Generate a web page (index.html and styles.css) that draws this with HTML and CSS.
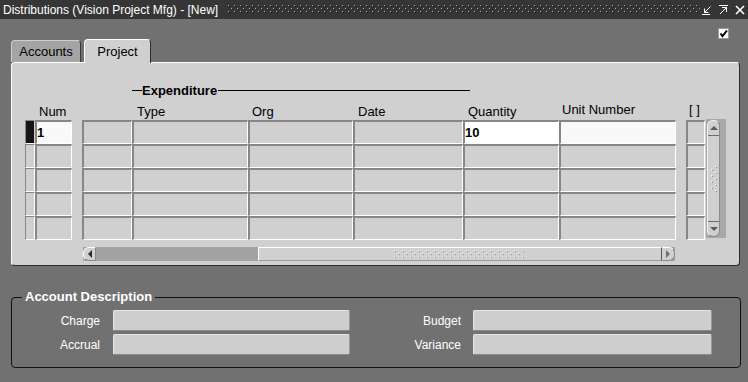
FILE: index.html
```html
<!DOCTYPE html>
<html lang="en">
<head>
  <meta charset="UTF-8" />
  <title>Distributions (Vision Project Mfg) - [New]</title>
  <link rel="stylesheet" href="styles.css">
</head>
<body>

  <div class="titlebar">
    <span class="title">Distributions (Vision Project Mfg) - [New]</span>
    <svg class="grip" height="9">
      <defs>
        <pattern id="tdots" width="6" height="6" patternUnits="userSpaceOnUse">
          <rect x="0" y="0" width="1" height="1" fill="#b0b0b0"/>
          <rect x="1" y="1" width="1" height="1" fill="#151515"/>
          <rect x="3" y="3" width="1" height="1" fill="#b0b0b0"/>
          <rect x="4" y="4" width="1" height="1" fill="#151515"/>
        </pattern>
      </defs>
      <rect width="100%" height="100%" fill="url(#tdots)"/>
    </svg>
    <div class="winbtns">
      <svg width="10" height="10" viewBox="0 0 10 10"><path d="M8.5 1.5L2.5 7.5M2.5 3.5V7.5H6.5M0 9.5H8" stroke="#fff" fill="none"/></svg>
      <svg width="10" height="10" viewBox="0 0 10 10"><path d="M1 0.5H10M2 9L8.5 2.5M4 2.5H8.5V7" stroke="#fff" fill="none"/></svg>
      <svg width="10" height="10" viewBox="0 0 10 10"><path d="M1 1L9 9M9 1L1 9" stroke="#fff" stroke-width="1.6" fill="none"/></svg>
    </div>
  </div>

  <div class="window">
    <div class="toolbar">
      <svg width="12" height="11" viewBox="0 0 12 11">
        <rect x="0.5" y="0.5" width="10" height="10" fill="#fff" stroke="#9a9a9a"/>
        <path d="M2.5 5.5L4.5 8.2L9 2.5" stroke="#000" stroke-width="2" fill="none"/>
      </svg>
    </div>

    <div class="tabs">
      <div class="tab">Accounts</div>
      <div class="tab active">Project</div>
    </div>

    <div class="panel">
      <div class="grid">
        <div class="exp">Expenditure</div>

        <div class="hd num">Num</div>
        <div class="hd type">Type</div>
        <div class="hd org">Org</div>
        <div class="hd date">Date</div>
        <div class="hd qty">Quantity</div>
        <div class="hd unit high">Unit Number</div>
        <div class="hd br high">[ ]</div>

        <div class="c ind cur"></div><div class="c num val white">1</div><div class="c blank"></div><div class="c type"></div><div class="c org"></div><div class="c date"></div><div class="c qty val pure">10</div><div class="c unit white"></div><div class="c br"></div>
        <div class="c ind"></div><div class="c num"></div><div class="c blank"></div><div class="c type"></div><div class="c org"></div><div class="c date"></div><div class="c qty"></div><div class="c unit"></div><div class="c br"></div>
        <div class="c ind"></div><div class="c num"></div><div class="c blank"></div><div class="c type"></div><div class="c org"></div><div class="c date"></div><div class="c qty"></div><div class="c unit"></div><div class="c br"></div>
        <div class="c ind"></div><div class="c num"></div><div class="c blank"></div><div class="c type"></div><div class="c org"></div><div class="c date"></div><div class="c qty"></div><div class="c unit"></div><div class="c br"></div>
        <div class="c ind"></div><div class="c num"></div><div class="c blank"></div><div class="c type"></div><div class="c org"></div><div class="c date"></div><div class="c qty"></div><div class="c unit"></div><div class="c br"></div>

        <div class="vscroll">
          <div class="vthumb">
            <div class="vbtn up"></div>
            <svg width="7" height="26" viewBox="0 0 7 26">
              <g fill="#fafafa">
                <rect x="5" y="0" width="1" height="1"/><rect x="1" y="3" width="1" height="1"/>
                <rect x="5" y="6" width="1" height="1"/><rect x="1" y="9" width="1" height="1"/>
                <rect x="5" y="12" width="1" height="1"/><rect x="1" y="15" width="1" height="1"/>
                <rect x="5" y="18" width="1" height="1"/><rect x="1" y="21" width="1" height="1"/>
                <rect x="5" y="24" width="1" height="1"/>
              </g>
              <g fill="#8a8a8a">
                <rect x="6" y="1" width="1" height="1"/><rect x="2" y="4" width="1" height="1"/>
                <rect x="6" y="7" width="1" height="1"/><rect x="2" y="10" width="1" height="1"/>
                <rect x="6" y="13" width="1" height="1"/><rect x="2" y="16" width="1" height="1"/>
                <rect x="6" y="19" width="1" height="1"/><rect x="2" y="22" width="1" height="1"/>
                <rect x="6" y="25" width="1" height="1"/>
              </g>
            </svg>
            <div class="vbtn down"></div>
          </div>
        </div>

        <div class="hscroll">
          <div class="hbtn left"></div>
          <div class="track"></div>
          <div class="hthumb">
            <svg width="132" height="8">
              <defs>
                <pattern id="hdots" width="8" height="6" patternUnits="userSpaceOnUse">
                  <rect x="0" y="0" width="1" height="1" fill="#fafafa"/>
                  <rect x="1" y="1" width="1" height="1" fill="#8a8a8a"/>
                  <rect x="4" y="3" width="1" height="1" fill="#fafafa"/>
                  <rect x="5" y="4" width="1" height="1" fill="#8a8a8a"/>
                </pattern>
              </defs>
              <rect width="132" height="8" fill="url(#hdots)"/>
            </svg>
          </div>
          <div class="hbtn right"></div>
        </div>
      </div>
    </div>

    <fieldset class="group">
      <legend>Account Description</legend>
      <div class="fields">
        <label>Charge</label><span class="field"></span>
        <label class="second">Budget</label><span class="field wide"></span>
        <label>Accrual</label><span class="field"></span>
        <label class="second">Variance</label><span class="field wide"></span>
      </div>
    </fieldset>
  </div>

</body>
</html>
```

FILE: styles.css
```css
body {
  margin: 0;
  width: 748px;
  height: 382px;
  overflow: hidden;
  background: #717171;
  font-family: "Liberation Sans", Arial, sans-serif;
  font-size: 13px;
  color: #000;
}

/* window title */
.titlebar {
  display: flex;
  align-items: center;
  height: 19px;
  padding: 0 3px;
  background: #363636;
  color: #fff;
}
.title {
  font-size: 12px;
  white-space: nowrap;
}
.grip {
  flex: 1;
  min-width: 0;
  margin: 0 2px 0 10px;
}
.winbtns {
  display: flex;
  gap: 6px;
}
.winbtns svg:last-child {
  margin-left: 1px;
}

.window {
  padding: 0 7px 0 11px;
}
.toolbar {
  display: flex;
  justify-content: flex-end;
  height: 11px;
  padding: 9px 11px 0 0;
}
.toolbar svg {
  display: block;
}

/* tabs */
.tabs {
  position: relative;
  z-index: 1;
  display: flex;
  align-items: flex-end;
  gap: 3px;
  height: 24px;
}
.tab {
  box-sizing: border-box;
  width: 70px;
  height: 22px;
  margin-bottom: 1px;
  display: flex;
  align-items: center;
  justify-content: center;
  background: #a4a4a4;
  border: 1px solid;
  border-color: #cfcfcf #3a3a3a transparent #cfcfcf;
  border-bottom: 0;
  border-radius: 4px 4px 0 0;
}
.tab.active {
  width: 67px;
  height: 24px;
  margin-bottom: 0;
  background: #d0d0d0;
  border-color: #fff #2e2e2e transparent #fff;
}

/* main block */
.panel {
  box-sizing: border-box;
  width: 729px;
  height: 204px;
  margin-top: -1px;
  padding: 20px 0 0 13px;
  background: #d0d0d0;
  border: 1px solid;
  border-color: #fff #2a2a2a #2a2a2a #fff;
  border-radius: 4px;
}
.grid {
  display: grid;
  grid-template-columns: 10px 37px 10px 50px 116px 105px 110px 96px 117px 10px 19px 1px 20px;
  grid-template-rows: 15px 22px repeat(5, 24px) 21px;
}
.exp {
  grid-column: 5 / span 4;
  width: 338px;
  display: flex;
  align-items: center;
  font-weight: bold;
  line-height: 15px;
}
.exp::before {
  content: "";
  width: 10px;
  border-top: 1px solid #000;
}
.exp::after {
  content: "";
  flex: 1;
  margin-left: 1px;
  border-top: 1px solid #000;
}
.hd {
  align-self: end;
  line-height: 15px;
  padding: 0 0 1px 4px;
  white-space: nowrap;
}
.hd.high {
  padding: 0 0 3px 3px;
}
.hd.type, .hd.date, .hd.qty {
  padding-left: 5px;
}

.ind { grid-column: 1; }
.num { grid-column: 2; }
.blank { grid-column: 4; }
.type { grid-column: 5; }
.org { grid-column: 6; }
.date { grid-column: 7; }
.qty { grid-column: 8; }
.unit { grid-column: 9; }
.br { grid-column: 11; }

.c {
  box-sizing: border-box;
  border-style: solid;
  border-width: 2px 1px 1px 2px;
  border-color: #868686 #fff #fff #868686;
}
.c.white {
  background: #f9f9f9;
}
.c.pure {
  background: #fff;
}
.c.val {
  font-weight: bold;
  line-height: 21px;
}
.c.ind {
  border-width: 1px;
}
.c.ind.cur {
  background: #151515;
  border-color: #8a8a8a #d0d0d0 #fff #8a8a8a;
}

/* vertical scrollbar */
.vscroll {
  grid-column: 13;
  grid-row: 3 / span 5;
  box-sizing: border-box;
  height: 119px;
  margin-top: -1px;
  padding: 1px 6px 1px 1px;
  background: #a8a8a8;
}
.vthumb {
  box-sizing: border-box;
  height: 100%;
  display: flex;
  flex-direction: column;
  justify-content: space-between;
  align-items: center;
  background: #d0d0d0;
  border: 1px solid;
  border-color: #f2f2f2 #8a8a8a #8a8a8a #f2f2f2;
  border-radius: 6px;
}
.vbtn {
  box-sizing: border-box;
  width: 100%;
  height: 15px;
  display: flex;
  align-items: center;
  justify-content: center;
}
.vbtn.up {
  border-bottom: 1px solid #6a6a6a;
}
.vbtn.down {
  border-top: 1px solid #6a6a6a;
}
.vbtn::after {
  content: "";
  border-left: 4px solid transparent;
  border-right: 4px solid transparent;
}
.vbtn.up::after {
  border-bottom: 4px solid #5a5a5a;
}
.vbtn.down::after {
  border-top: 4px solid #5a5a5a;
}

/* horizontal scrollbar */
.hscroll {
  grid-column: 4 / 10;
  align-self: end;
  display: flex;
  height: 14px;
  margin: 0 1px 0 1px;
  background: #a2a2a2;
}
.hbtn {
  box-sizing: border-box;
  width: 13px;
  display: flex;
  align-items: center;
  justify-content: center;
  background: #d0d0d0;
  border: 1px solid;
  border-color: #fff #8a8a8a #8a8a8a #fff;
}
.hbtn.left {
  border-radius: 6px 0 0 6px;
}
.hbtn.left::after {
  content: "";
  border-top: 4px solid transparent;
  border-bottom: 4px solid transparent;
  border-right: 4px solid #2a2a2a;
}
.hbtn.right {
  width: 14px;
  border-left-color: #555;
  border-radius: 0 6px 6px 0;
}
.hbtn.right::after {
  content: "";
  border-top: 4px solid transparent;
  border-bottom: 4px solid transparent;
  border-left: 4px solid #707070;
}
.track {
  width: 162px;
}
.hthumb {
  box-sizing: border-box;
  flex: 1;
  display: flex;
  align-items: center;
  justify-content: center;
  background: #d0d0d0;
  border: 1px solid;
  border-color: #fff #9a9a9a #9a9a9a #fff;
  border-right: 0;
}

/* account description */
.group {
  box-sizing: border-box;
  width: 730px;
  min-width: 0;
  margin: 24px 0 0 0;
  padding: 6px 0 12px 0;
  border: 1px solid #111;
  border-radius: 4px;
}
.group legend {
  margin-left: 10px;
  padding: 0 3px;
  color: #fff;
  font-weight: bold;
  font-size: 13px;
  line-height: 14px;
}
.fields {
  display: grid;
  grid-template-columns: 101px 237px 123px 239px;
  row-gap: 3px;
}
.fields label {
  align-self: center;
  padding-right: 13px;
  text-align: right;
  color: #fff;
  font-size: 12px;
}
.fields label.second {
  padding-right: 12px;
}
.field {
  box-sizing: border-box;
  height: 21px;
  background: #cecece;
  border: 1px solid;
  border-color: #e6e6e6 #9a9a9a #8a8a8a #e6e6e6;
  border-radius: 2px;
}
```
